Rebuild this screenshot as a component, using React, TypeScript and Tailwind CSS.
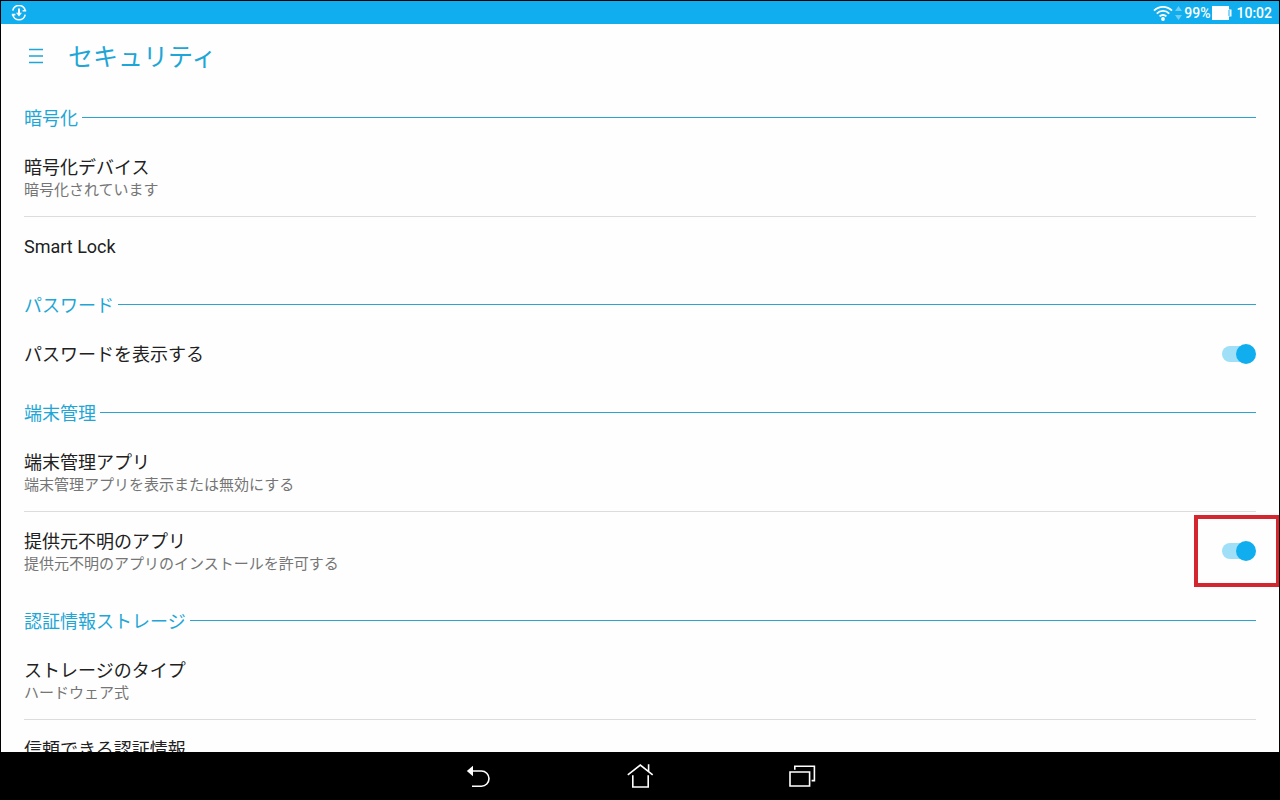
import { useState } from "react";

type Item = {
  id: string;
  title: string;
  summary?: string;
  toggle?: boolean;
  highlighted?: boolean;
};

type Section = {
  heading: string;
  items: Item[];
};

const sections: Section[] = [
  {
    heading: "暗号化",
    items: [
      { id: "encrypt", title: "暗号化デバイス", summary: "暗号化されています" },
      { id: "smart-lock", title: "Smart Lock" },
    ],
  },
  {
    heading: "パスワード",
    items: [{ id: "show-password", title: "パスワードを表示する", toggle: true }],
  },
  {
    heading: "端末管理",
    items: [
      { id: "admin-apps", title: "端末管理アプリ", summary: "端末管理アプリを表示または無効にする" },
      {
        id: "unknown-sources",
        title: "提供元不明のアプリ",
        summary: "提供元不明のアプリのインストールを許可する",
        toggle: true,
        highlighted: true,
      },
    ],
  },
  {
    heading: "認証情報ストレージ",
    items: [
      { id: "storage-type", title: "ストレージのタイプ", summary: "ハードウェア式" },
      { id: "trusted", title: "信頼できる認証情報" },
    ],
  },
];

function StatusBar() {
  return (
    <div className="flex h-[23px] shrink-0 items-center justify-between bg-[#10aeee] pr-[7px] pl-[10px] text-white">
      <svg width="16" height="16" viewBox="0 0 16 16" fill="none" stroke="currentColor" strokeWidth="1.6">
        <path d="M1.8 5.6A6.3 6.3 0 0 1 14.2 5.6M14.2 9.6A6.3 6.3 0 0 1 1.8 9.6" />
        <path d="M0.8 9.6h3.6M15.2 5.8h-3.6" />
        <path d="M8 3.6v5" strokeWidth="2" />
        <path d="M5 7.8h6L8 11.6z" fill="currentColor" stroke="none" />
      </svg>
      <div className="flex items-center">
        <svg width="20" height="16" viewBox="0 0 20 16" fill="none" stroke="currentColor" strokeWidth="1.8">
          <path d="M1 5.6a12.6 12.6 0 0 1 18 0" />
          <path d="M3.8 8.6a8.6 8.6 0 0 1 12.4 0" />
          <path d="M6.6 11.4a4.8 4.8 0 0 1 6.8 0" />
          <circle cx="10" cy="14" r="1.9" fill="currentColor" stroke="none" />
        </svg>
        <svg className="ml-[2px] opacity-40" width="7" height="16" viewBox="0 0 7 16" fill="currentColor">
          <path d="M0 6l3.5-5L7 6zM0 10l3.5 5L7 10z" />
        </svg>
        <span className="ml-[2px] text-sm leading-5 font-medium">99%</span>
        <svg className="ml-[2px]" width="20" height="14" viewBox="0 0 20 14" fill="currentColor">
          <path d="M0 0h17v3.5h2.5v7H17V14H0z" />
          <path d="M17 4v6" stroke="#10aeee" strokeWidth="1" />
        </svg>
        <span className="ml-1 text-sm leading-5 font-medium">10:02</span>
      </div>
    </div>
  );
}

function SettingRow({ item }: { item: Item }) {
  const [on, setOn] = useState(true);

  return (
    <li className="flex items-center justify-between border-[#dcdcdc] not-first:border-t">
      <div className={item.summary ? "pt-[19px] pb-[15px]" : "pt-[19px] pb-4"}>
        <label htmlFor={item.toggle ? item.id : undefined} className="block text-lg leading-[22px] text-[#212121]">
          {item.title}
        </label>
        {item.summary && <p className="text-[15px] leading-[22px] text-[#757575]">{item.summary}</p>}
      </div>
      {item.toggle && (
        <div className="relative flex">
          <span className="absolute inset-y-[2px] left-0 w-7 rounded-full bg-[#9fdff8]" />
          <input
            id={item.id}
            type="checkbox"
            role="switch"
            checked={on}
            onChange={() => setOn(!on)}
            className="relative h-5 w-[34px] appearance-none before:block before:size-5 before:rounded-full before:bg-[#bdbdbd] checked:before:ml-[14px] checked:before:bg-[#10aeee]"
          />
          {item.highlighted && (
            <span className="pointer-events-none absolute -inset-y-[26px] -right-6 -left-7 border-4 border-[#d3262e]" />
          )}
        </div>
      )}
    </li>
  );
}

function NavBar() {
  return (
    <nav className="flex h-12 shrink-0 items-center justify-center gap-[130px] bg-black text-white">
      <button aria-label="戻る">
        <svg width="32" height="32" viewBox="0 0 32 32" fill="none" stroke="currentColor" strokeWidth="1.6">
          <path d="M9 11h10.4a7.6 7.6 0 0 1 0 15.2H10" />
          <path d="M4.8 11l6.2-5.2v10.4z" fill="currentColor" stroke="none" />
        </svg>
      </button>
      <button aria-label="ホーム">
        <svg width="32" height="32" viewBox="0 0 32 32" fill="none" stroke="currentColor" strokeWidth="1.6">
          <path d="M3.8 14.8L16.3 5l12.4 9.8M24.6 4.2v7.2" />
          <path d="M8.8 15.2v11.8h15.4V15.2" />
        </svg>
      </button>
      <button aria-label="最近使ったアプリ">
        <svg width="32" height="32" viewBox="0 0 32 32" fill="none" stroke="currentColor" strokeWidth="1.6">
          <path d="M4 12h19.6v14H4z" />
          <path d="M8.8 9.8V6.2h19.6v14.4h-2.8" />
        </svg>
      </button>
    </nav>
  );
}

export default function App() {
  return (
    <div className="flex h-screen flex-col bg-black font-['Roboto','Noto_Sans_CJK_JP',sans-serif]">
      <div className="flex min-h-0 flex-1 flex-col border-x border-t border-black bg-[#fefefe]">
        <StatusBar />
        <header className="flex h-[63px] shrink-0 items-center pl-[27px] text-[#1ea6d6]">
          <button aria-label="メニュー">
            <svg width="16" height="16" viewBox="0 0 16 16" stroke="currentColor" strokeWidth="1.4">
              <path d="M1 1.5h14M1 8h14M1 14.5h14" />
            </svg>
          </button>
          <h1 className="ml-6 pt-1 text-[25px] leading-8">セキュリティ</h1>
        </header>
        <main className="min-h-0 flex-1 overflow-hidden px-[23px]">
          {sections.map((section) => (
            <section key={section.heading}>
              <div className="flex items-center gap-1 pt-[18px] pb-2">
                <h2 className="pt-[3px] text-lg leading-[22px] text-[#1ea6d6]">{section.heading}</h2>
                <span className="h-px flex-1 bg-[#2ba5cf]" />
              </div>
              <ul>
                {section.items.map((item) => (
                  <SettingRow key={item.id} item={item} />
                ))}
              </ul>
            </section>
          ))}
        </main>
      </div>
      <NavBar />
    </div>
  );
}
